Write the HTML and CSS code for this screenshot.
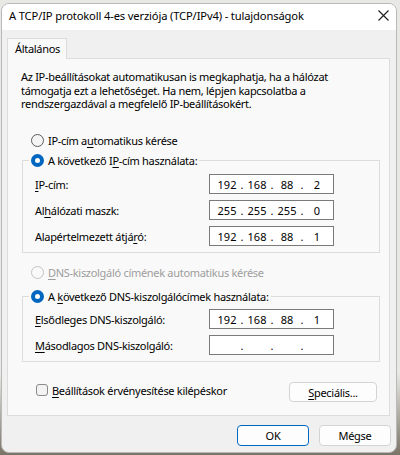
FILE: index.html
```html
<!DOCTYPE html>
<html lang="hu">
<head>
<meta charset="utf-8">
<title>TCP/IPv4</title>
<link rel="stylesheet" href="styles.css">
</head>
<body>
<div class="window">
  <div class="titlebar">
    <span class="title">A TCP/IP protokoll 4-es verziója (TCP/IPv4) - tulajdonságok</span>
    <svg class="close" width="11" height="11" viewBox="0 0 11 11"><path d="M0.5 0.5 L10.5 10.5 M10.5 0.5 L0.5 10.5" stroke="#1b1b1b" stroke-width="1.1" fill="none"/></svg>
  </div>
  <div class="client">
    <div class="tabs"><div class="tab">Általános</div></div>
    <div class="panel">
      <p class="desc">Az IP-beállításokat automatikusan is megkaphatja, ha a hálózat<br>támogatja ezt a lehetőséget. Ha nem, lépjen kapcsolatba a<br>rendszergazdával a megfelelő IP-beállításokért.</p>

      <div class="radio-row first"><span class="radio"></span><span>IP-cím a<u>u</u>tomatikus kérése</span></div>

      <fieldset class="group">
        <legend><span class="radio-row"><span class="radio checked"></span><span>A következő I<u>P</u>-cím használata:</span></span></legend>
        <div class="field"><span class="label"><u>I</u>P-cím:</span><div class="ip"><span>192</span><i>.</i><span>168</span><i>.</i><span>88</span><i>.</i><span>2</span></div></div>
        <div class="field"><span class="label">Al<u>h</u>álózati maszk:</span><div class="ip"><span>255</span><i>.</i><span>255</span><i>.</i><span>255</span><i>.</i><span>0</span></div></div>
        <div class="field"><span class="label">Alapértelmezett átjá<u>r</u>ó:</span><div class="ip"><span>192</span><i>.</i><span>168</span><i>.</i><span>88</span><i>.</i><span>1</span></div></div>
      </fieldset>

      <div class="radio-row disabled"><span class="radio"></span><span><u>D</u>NS-kiszolgáló címének automatikus kérése</span></div>

      <fieldset class="group dns">
        <legend><span class="radio-row"><span class="radio checked"></span><span>A <u>k</u>övetkező DNS-kiszolgálócímek használata:</span></span></legend>
        <div class="field"><span class="label"><u>E</u>lsődleges DNS-kiszolgáló:</span><div class="ip"><span>192</span><i>.</i><span>168</span><i>.</i><span>88</span><i>.</i><span>1</span></div></div>
        <div class="field"><span class="label"><u>M</u>ásodlagos DNS-kiszolgáló:</span><div class="ip"><span></span><i>.</i><span></span><i>.</i><span></span><i>.</i><span></span></div></div>
      </fieldset>

      <div class="options">
        <label class="check-row"><span class="checkbox"></span><span><u>B</u>eállítások érvényesítése kilépéskor</span></label>
        <button class="btn special"><u>S</u>peciális...</button>
      </div>
    </div>
  </div>
  <div class="footer">
    <button class="btn default">OK</button>
    <button class="btn">Mégse</button>
  </div>
</div>
</body>
</html>
```

FILE: styles.css
```css
* { box-sizing: border-box; }
html, body { margin: 0; height: 100%; }
body {
  background: linear-gradient(#e8e8e4 0, #e8e8e4 82%, #7a7466 100%);
  font-family: "Noto Sans", "Open Sans", sans-serif;
  font-size: 11px;
  letter-spacing: -0.3px;
  color: #000;
  overflow: hidden;
}
u { text-decoration: underline; text-underline-offset: 2px; }

.window {
  margin: 3px 0 0 1px;
  width: 396px;
  height: 450px;
  background: #f0f0f0;
  border: 1px solid #b9b9b9;
  border-radius: 8px;
  overflow: hidden;
  display: flex;
  flex-direction: column;
}

.titlebar {
  height: 26px;
  flex: none;
  background: #fff;
  display: flex;
  align-items: center;
  justify-content: space-between;
  padding: 0 7px 3px 7px;
}
.title { white-space: nowrap; font-size: 11.2px; letter-spacing: -0.15px; }
.close { display: block; }

.client {
  flex: 1;
  display: flex;
  flex-direction: column;
  padding: 8px 6px 0 5px;
}
.tabs { display: flex; flex: none; }
.tab {
  width: 60px;
  height: 21px;
  padding-left: 7px;
  line-height: 19px;
  background: #f9f9f9;
  border: 1px solid #dcdcdc;
  border-bottom: none;
  margin-bottom: -1px;
  position: relative;
  z-index: 1;
}
.panel {
  flex: 1;
  background: #f9f9f9;
  border: 1px solid #dcdcdc;
  padding: 11px 10px 0 13px;
}
.desc {
  margin: 0;
  line-height: 13.67px;
  white-space: nowrap;
}

.radio-row {
  display: flex;
  align-items: center;
  gap: 4px;
  height: 16px;
  white-space: nowrap;
}
.radio-row.first { margin: 21px 0 0 10px; }
.radio-row.disabled { margin: 11px 0 0 10px; color: #9d9d9d; }
.radio {
  width: 13px;
  height: 13px;
  border-radius: 50%;
  border: 1px solid #5d5d5d;
  background: #f4f4f4;
  flex: none;
}
.radio-row.disabled .radio { border-color: #c3c3c3; background: #f9f9f9; }
.radio.checked {
  border: 4px solid #0067c0;
  background: #fff;
}

.group {
  margin: 4px 0 0 1px;
  width: 358px;
  border: 1px solid #dcdcdc;
  padding: 6px 0 6px 12px;
}
.group.dns { margin-top: 8px; padding-top: 5px; }
.group legend {
  padding: 0 2px;
  margin-left: -6px;
}
.field {
  display: flex;
  align-items: center;
  height: 20px;
  margin-bottom: 6px;
}
.field:last-child { margin-bottom: 0; }
.label { width: 174px; flex: none; white-space: nowrap; }
.ip {
  display: flex;
  align-items: center;
  width: 125px;
  height: 20px;
  background: #fff;
  border: 1px solid #7a7a7a;
  padding-left: 6px;
  letter-spacing: 0;
}
.ip span { width: 22px; text-align: center; }
.ip i { font-style: normal; width: 8px; text-align: center; }

.options {
  display: flex;
  align-items: flex-start;
  justify-content: space-between;
  margin: 20px 2px 0 15px;
}
.check-row {
  display: flex;
  align-items: center;
  gap: 4px;
  height: 16px;
  margin-top: 0;
  white-space: nowrap;
}
.checkbox {
  width: 12px;
  height: 12px;
  border: 1px solid #8a8a8a;
  border-radius: 3px;
  background: #f3f3f3;
  flex: none;
}
.btn {
  font: inherit;
  letter-spacing: inherit;
  color: #000;
  height: 21px;
  background: #fdfdfd;
  border: 1px solid #d3d3d3;
  border-radius: 4px;
  padding: 0;
}
.special { width: 88px; height: 20px; }

.footer {
  flex: none;
  display: flex;
  justify-content: flex-end;
  gap: 10px;
  padding: 9px 5px 6px 0;
}
.footer .btn { width: 72px; }
.btn.default { border-color: #0067c0; }
```
